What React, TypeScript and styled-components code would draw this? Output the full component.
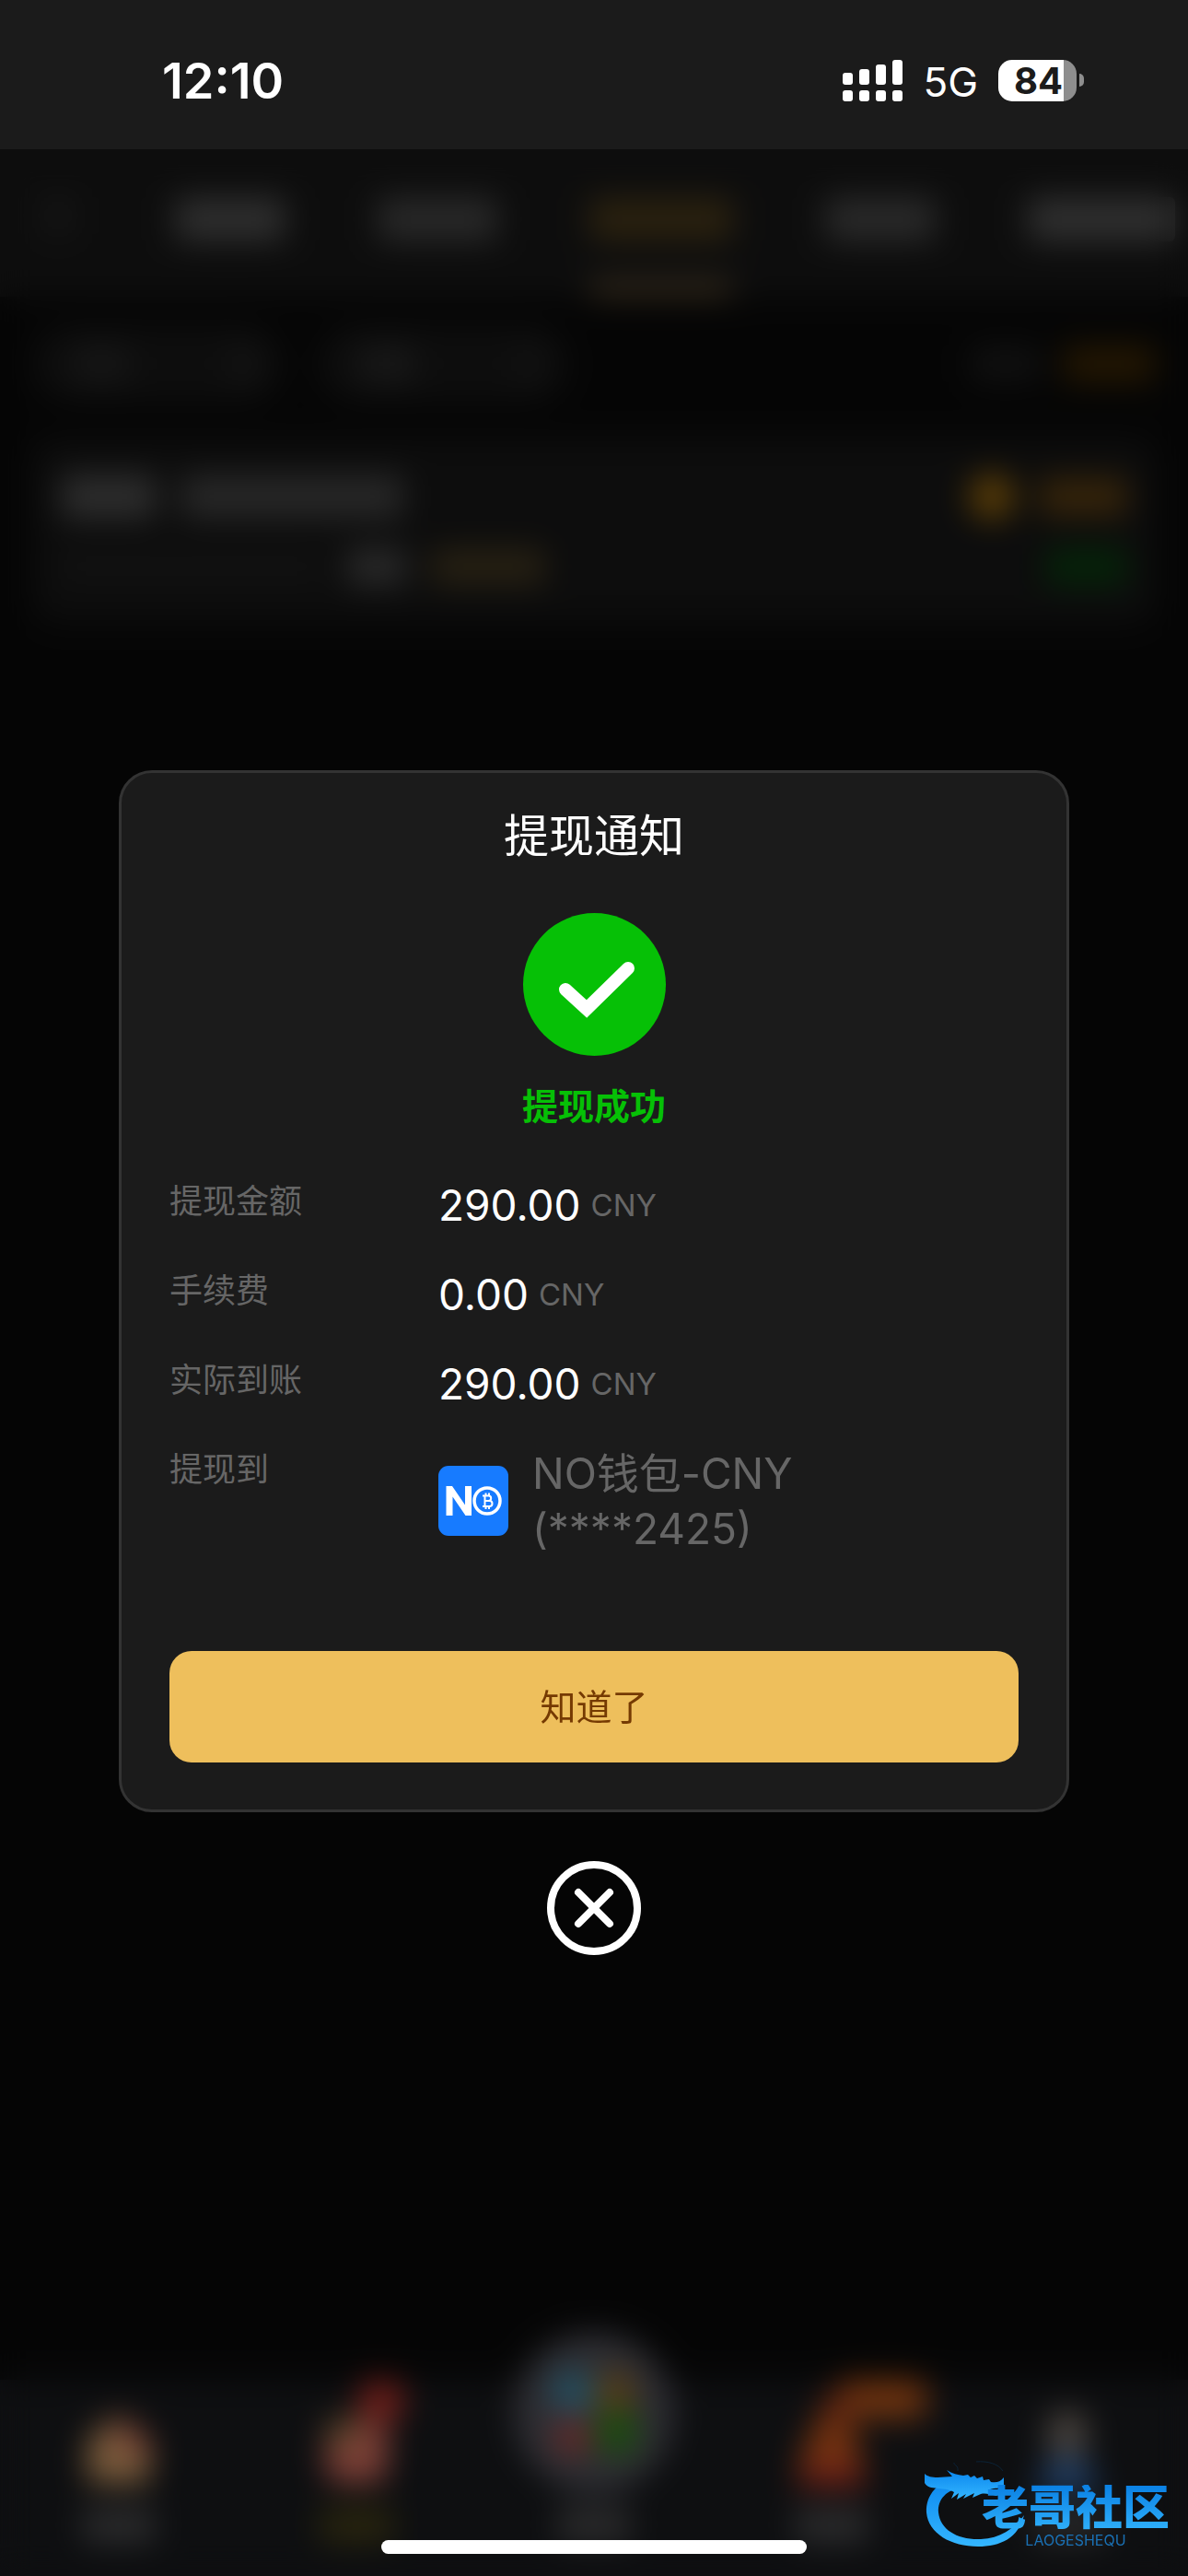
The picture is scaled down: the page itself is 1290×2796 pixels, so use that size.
import React from 'react';
import styled, { createGlobalStyle } from 'styled-components';

const GlobalStyle = createGlobalStyle`
  * { box-sizing: border-box; }
  html, body { margin: 0; padding: 0; background: #0b0b0b; }
  body { font-family: Inter, "Noto Sans CJK SC", sans-serif; color: #fff; }
  button { font-family: inherit; border: 0; padding: 0; cursor: pointer; }
`;

const Screen = styled.div`
  position: relative;
  display: flex;
  flex-direction: column;
  min-height: 100vh;
  overflow: hidden;
`;

/* ---------- status bar ---------- */

const StatusBar = styled.header`
  display: flex;
  align-items: center;
  justify-content: space-between;
  height: 162px;
  padding: 12px 113px 0 176px;
  background: #1b1b1b;
`;

const Clock = styled.time`
  font-size: 54px;
  font-weight: 600;
  line-height: 60px;
  padding-top: 2px;
`;

const StatusIcons = styled.div`
  display: flex;
  align-items: center;
  gap: 22px;
`;

const Network = styled.span`
  font-size: 44px;
  line-height: 48px;
  padding-top: 4px;
`;

const Battery = styled.div`
  display: flex;
  align-items: center;
  gap: 3px;
`;

const BatteryBody = styled.div`
  width: 85px;
  height: 45px;
  padding-left: 2px;
  border-radius: 15px;
  background: linear-gradient(to right, #fff 71px, #8e8e8e 71px);
  color: #1b1b1b;
  font-size: 40px;
  font-weight: 700;
  line-height: 45px;
  text-align: center;
`;

const BatteryTip = styled.div`
  width: 5px;
  height: 14px;
  border-radius: 0 7px 7px 0;
  background: #8e8e8e;
`;

/* ---------- page behind the dialog ---------- */

const Main = styled.main`
  position: relative;
  flex: 1;
  display: flex;
  flex-direction: column;
`;

const Page = styled.div`
  flex: 1;
  display: flex;
  flex-direction: column;
  background: #0b0b0b;
`;

const Smudge = styled.div<{ $w: number; $h?: number; $c: string; $r?: number }>`
  flex: none;
  width: ${p => p.$w}px;
  height: ${p => p.$h ?? 40}px;
  border-radius: ${p => p.$r ?? 6}px;
  background: ${p => p.$c};
`;

const Tabs = styled.div`
  display: flex;
  gap: 100px;
  height: 160px;
  padding: 0 36px;
  overflow: hidden;
  background: #1b1b1b;
`;

const Tab = styled.div`
  display: flex;
  flex: none;
  flex-direction: column;
  justify-content: space-between;
  align-items: center;
  min-width: 54px;
  padding: 52px 0 4px;
`;

const Filters = styled.div`
  display: flex;
  align-items: center;
  gap: 40px;
  padding: 32px 36px 40px;
`;

const Pill = styled.div`
  display: flex;
  align-items: center;
  justify-content: space-between;
  width: 270px;
  height: 82px;
  padding: 0 30px 0 44px;
  border-radius: 41px;
  background: #1b1b1b;
`;

const Total = styled.div`
  display: flex;
  gap: 24px;
  margin-left: auto;
`;

const Card = styled.div`
  display: flex;
  flex-direction: column;
  gap: 34px;
  margin: 0 36px;
  padding: 42px 30px 40px;
  border-radius: 24px;
  background: #1a1a1a;
`;

const CardRow = styled.div`
  display: flex;
  align-items: center;
  gap: 26px;
  height: 42px;
`;

const Push = styled.div`
  flex: 1;
`;

const BottomNav = styled.div`
  display: grid;
  grid-template-columns: repeat(5, 1fr);
  height: 213px;
  margin-top: auto;
  padding-top: 42px;
  background: #1c1e22;
`;

const NavItem = styled.div`
  display: flex;
  flex-direction: column;
  align-items: center;
  gap: 20px;
`;

const NavIcon = styled.svg`
  width: 76px;
  height: 76px;
  overflow: visible;
`;

/* ---------- dialog ---------- */

const Overlay = styled.div`
  position: absolute;
  inset: 0;
  display: flex;
  flex-direction: column;
  align-items: center;
  justify-content: center;
  gap: 53px;
  background: rgba(0, 0, 0, 0.5);
  backdrop-filter: blur(17px);
`;

const Dialog = styled.section`
  display: flex;
  flex-direction: column;
  align-items: center;
  width: 80%;
  padding: 36px 52px 51px;
  border: 3px solid #333;
  border-radius: 36px;
  background: #1b1b1b;
`;

const Title = styled.h1`
  margin: 0 0 50px;
  font-size: 49px;
  font-weight: 400;
  line-height: 66px;
`;

const SuccessIcon = styled.svg`
  display: block;
  width: 155px;
  height: 155px;
`;

const Result = styled.p`
  margin: 27px 0 49px;
  color: #06c006;
  font-size: 39px;
  font-weight: 700;
  line-height: 56px;
`;

const Details = styled.dl`
  display: flex;
  flex-direction: column;
  gap: 37px;
  width: 100%;
  margin: 0 0 103px;
`;

const Row = styled.div`
  display: grid;
  grid-template-columns: 292px 1fr;
`;

const Label = styled.dt`
  color: #666;
  font-size: 36px;
  line-height: 52px;
`;

const Value = styled.dd`
  display: flex;
  align-items: center;
  gap: 11px;
  margin: 0;
  font-size: 46px;
  line-height: 60px;
`;

const Currency = styled.span`
  color: #666;
  font-size: 33px;
`;

const Wallet = styled(Value)`
  gap: 26px;
  color: #666;
`;

const WalletName = styled.span`
  max-width: 320px;
`;

const WalletLogo = styled.svg`
  flex: none;
  width: 76px;
  height: 76px;
`;

const Confirm = styled.button`
  width: 100%;
  height: 121px;
  border-radius: 24px;
  background: #eebf5c;
  color: #753a02;
  font-size: 39px;
  line-height: 56px;
`;

const Close = styled.button`
  width: 102px;
  height: 102px;
  background: none;

  svg {
    display: block;
    width: 102px;
    height: 102px;
  }
`;

/* ---------- floating marks ---------- */

const HomeIndicator = styled.div`
  position: absolute;
  bottom: 24px;
  left: 50%;
  width: 462px;
  height: 15px;
  margin-left: -231px;
  border-radius: 8px;
  background: #fff;
`;

const Watermark = styled.div`
  position: absolute;
  right: 20px;
  bottom: 30px;
  display: flex;
  width: 266px;
  height: 96px;
  justify-content: flex-end;
`;

const Dragon = styled.svg`
  position: absolute;
  left: 0;
  top: 0;
  width: 112px;
  height: 96px;
`;

const MarkText = styled.div`
  position: relative;
  display: flex;
  flex-direction: column;
  align-items: center;
  padding-top: 27px;
`;

const MarkName = styled.span`
  font-size: 51px;
  font-weight: 900;
  line-height: 50px;
  color: transparent;
  background: linear-gradient(#0a80e4, #2fb0fa);
  background-clip: text;
`;

const MarkLatin = styled.span`
  padding-top: 2px;
  color: #1a70b4;
  font-size: 16px;
  line-height: 16px;
`;

function SignalIcon() {
  const heights = [13, 17, 22, 27];
  return (
    <svg width="65" height="45" viewBox="0 0 65 45" fill="#fff" role="img" aria-label="信号">
      {heights.map((h, i) => (
        <g key={h}>
          <rect x={i * 18} y={27 - h} width="11" height={h} rx="3" />
          <rect x={i * 18} y="33" width="11" height="12" rx="3" />
        </g>
      ))}
    </svg>
  );
}

function NoWalletLogo() {
  return (
    <WalletLogo viewBox="0 0 76 76" aria-hidden="true">
      <rect width="76" height="76" rx="11" fill="#177bff" />
      <path d="M8.500 54V22h6.500l14 20.500V22h7v32h-6.500L15.500 33.500V54z" fill="#fff" />
      <circle cx="53" cy="38" r="14" fill="none" stroke="#fff" strokeWidth="3.500" />
      <path
        d="M48 32.500h6.500a2.700 2.700 0 0 1 0 5.400H50.500h5a3 3 0 0 1 0 6H48M50.500 32.500v11.400M51.500 29.500v3M55 29.500v3M51.500 44v3M55 44v3"
        fill="none"
        stroke="#fff"
        strokeWidth="2"
      />
    </WalletLogo>
  );
}

function DragonMark() {
  return (
    <Dragon viewBox="0 0 112 96" aria-hidden="true">
      <defs>
        <linearGradient id="dragon" x1="0" y1="0" x2="0" y2="1">
          <stop offset="0" stopColor="#0a86ee" />
          <stop offset="1" stopColor="#34b6ff" />
        </linearGradient>
      </defs>
      <g fill="url(#dragon)">
        <path d="M38 18C14 23 1 38 2 57c2 23 27 37 56 37 24 0 44-9 50-34-11 15-26 25-47 26-25 1-44-10-46-29-1-14 8-25 29-28z" />
        <path d="M0 15c3 3 8 4 14 4 6 0 10-1 16-1l-6-7c6 4 12 5 18 6l5-1 3 3 4-2 3 3 6-2 1 4 6-1 2 3c6 1 10 0 14-5v9c-5 3-9 3-15 3l12 3-5 5c-8-2-12-3-17-2l-9 4 2-5-12 6 3-5-10 6 2-7-8 6 3-7c-12-7-27-1-32-10z" />
      </g>
      <path d="M36 12C37 5 31 6 32 3M56 2c12-1 24 2 29 10" fill="none" stroke="#0c2438" strokeWidth="1" />
    </Dragon>
  );
}

const tabs = [
  { w: 120, c: '#5c5c5c' },
  { w: 130, c: '#505050' },
  { w: 156, c: '#54421e', active: true },
  { w: 120, c: '#525252' },
  { w: 160, c: '#5e5e5e' },
];

const amounts = [
  { label: '提现金额', value: '290.00' },
  { label: '手续费', value: '0.00' },
  { label: '实际到账', value: '290.00' },
];

export default function App() {
  return (
    <Screen>
      <GlobalStyle />
      <StatusBar>
        <Clock>12:10</Clock>
        <StatusIcons>
          <SignalIcon />
          <Network>5G</Network>
          <Battery>
            <BatteryBody>84</BatteryBody>
            <BatteryTip />
          </Battery>
        </StatusIcons>
      </StatusBar>

      <Main>
        <Page aria-hidden="true">
          <Tabs>
            <Tab><Smudge $w={28} $c="#2e2e2e" /></Tab>
            {tabs.map((t, i) => (
              <Tab key={i}>
                <Smudge $w={t.w} $h={48} $c={t.c} />
                {t.active && <Smudge $w={t.w} $h={10} $c="#b08a52" />}
              </Tab>
            ))}
          </Tabs>
          <Filters>
            <Pill><Smudge $w={60} $c="#2c2c2c" /><Smudge $w={24} $c="#2a2a2a" /></Pill>
            <Pill><Smudge $w={60} $c="#303030" /><Smudge $w={24} $c="#262626" /></Pill>
            <Total><Smudge $w={76} $c="#202020" /><Smudge $w={100} $c="#482e04" /></Total>
          </Filters>
          <Card>
            <CardRow>
              <Smudge $w={104} $h={48} $c="#5a5a5a" />
              <Smudge $w={242} $h={48} $c="#4e4e4e" />
              <Push />
              <Smudge $w={50} $h={50} $r={25} $c="#b47a0e" />
              <Smudge $w={96} $c="#6e4a14" />
            </CardRow>
            <CardRow>
              <Smudge $w={284} $h={30} $c="#242424" />
              <Smudge $w={66} $c="#525252" />
              <Smudge $w={124} $c="#4e4126" />
              <Push />
              <Smudge $w={88} $c="#0a4812" />
            </CardRow>
          </Card>
          <BottomNav>
            <NavItem>
              <NavIcon viewBox="0 0 76 76">
                <path d="M38 -4L72 22V70H4V22Z" fill="#f4b878" />
                <path d="M34 -2L74 22V38H36z" fill="#ec8468" />
              </NavIcon>
              <Smudge $w={80} $c="#545456" />
            </NavItem>
            <NavItem>
              <NavIcon viewBox="0 0 76 76">
                <rect x="4" y="2" width="68" height="68" rx="16" fill="#f87e6c" />
                <rect x="8" y="0" width="30" height="30" fill="#b08a54" />
                <rect x="40" y="-42" width="50" height="46" rx="20" fill="#d83c34" />
              </NavIcon>
              <Smudge $w={80} $c="#50481c" />
            </NavItem>
            <NavItem>
              <NavIcon viewBox="0 0 76 76">
                <circle cx="38" cy="-6" r="87" fill="#5c5c66" />
                <rect x="-6" y="-50" width="42" height="42" rx="10" fill="#46a0c4" />
                <rect x="42" y="-50" width="38" height="42" rx="10" fill="#ae7c2c" />
                <rect x="-4" y="0" width="38" height="38" rx="10" fill="#c85450" />
                <rect x="42" y="-8" width="42" height="46" rx="10" fill="#349a1c" />
              </NavIcon>
              <Smudge $w={80} $c="#545456" />
            </NavItem>
            <NavItem>
              <NavIcon viewBox="0 0 76 76">
                <path d="M30 -12L58 -8L76 70H0L8 30Z" fill="#e86420" />
                <path d="M10 52H66L76 74H0Z" fill="#d83c30" />
                <rect x="44" y="-42" width="98" height="42" rx="14" fill="#e06820" />
                <rect x="30" y="-28" width="32" height="30" rx="8" fill="#c04820" />
              </NavIcon>
              <Smudge $w={80} $c="#545456" />
            </NavItem>
            <NavItem>
              <NavIcon viewBox="0 0 76 76">
                <ellipse cx="36" cy="18" rx="23" ry="27" fill="#94887e" />
                <path d="M4 80C4 52 18 42 36 42S68 52 68 80Z" fill="#3c78c4" />
              </NavIcon>
              <Smudge $w={80} $c="#4c4c4e" />
            </NavItem>
          </BottomNav>
        </Page>

        <Overlay>
          <Dialog role="dialog" aria-labelledby="dialog-title">
            <Title id="dialog-title">提现通知</Title>
            <SuccessIcon viewBox="0 0 155 155" aria-hidden="true">
              <circle cx="77.500" cy="77.500" r="77.500" fill="#06c006" />
              <path
                d="M46 83L69 104L114 60"
                fill="none"
                stroke="#fff"
                strokeWidth="14"
                strokeLinecap="round"
                strokeLinejoin="miter"
              />
            </SuccessIcon>
            <Result>提现成功</Result>
            <Details>
              {amounts.map(a => (
                <Row key={a.label}>
                  <Label>{a.label}</Label>
                  <Value>
                    {a.value}
                    <Currency>CNY</Currency>
                  </Value>
                </Row>
              ))}
              <Row>
                <Label>提现到</Label>
                <Wallet>
                  <NoWalletLogo />
                  <WalletName>NO钱包-CNY (****2425)</WalletName>
                </Wallet>
              </Row>
            </Details>
            <Confirm type="button">知道了</Confirm>
          </Dialog>
          <Close type="button" aria-label="关闭">
            <svg viewBox="0 0 102 102" fill="none" stroke="#fff" strokeWidth="8">
              <circle cx="51" cy="51" r="47" />
              <path d="M34 34L68 68M68 34L34 68" strokeLinecap="round" />
            </svg>
          </Close>
        </Overlay>
      </Main>

      <HomeIndicator />
      <Watermark>
        <DragonMark />
        <MarkText>
          <MarkName>老哥社区</MarkName>
          <MarkLatin>LAOGESHEQU</MarkLatin>
        </MarkText>
      </Watermark>
    </Screen>
  );
}
